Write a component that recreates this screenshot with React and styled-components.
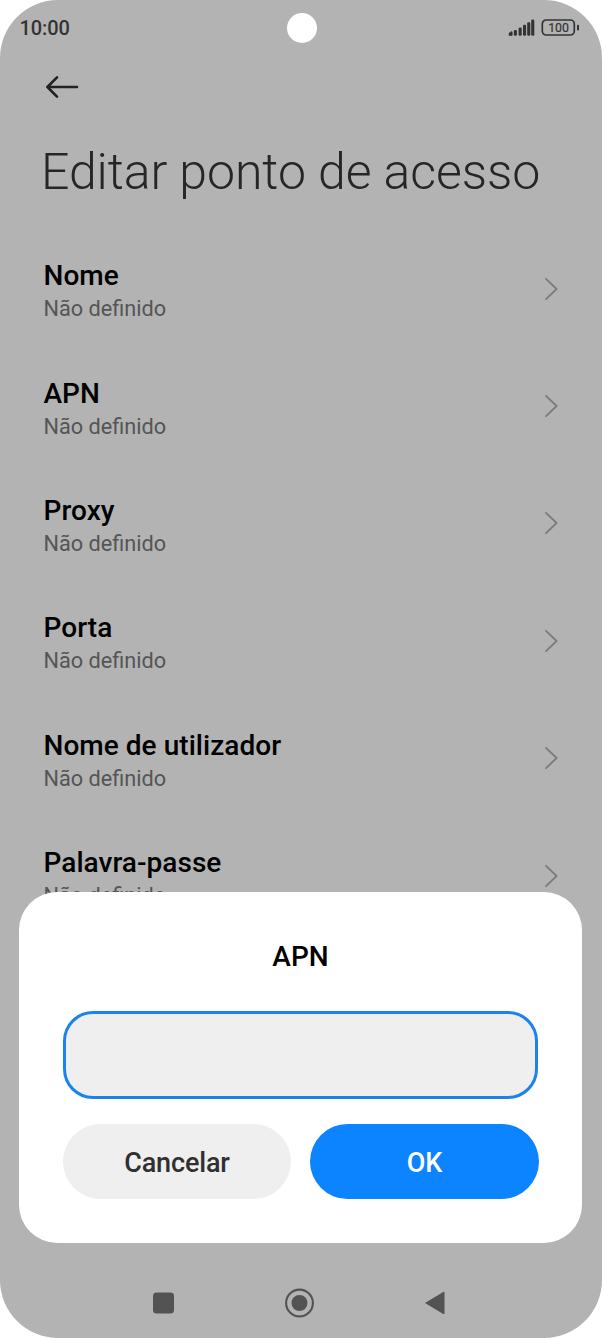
import React from "react";
import styled, { createGlobalStyle } from "styled-components";

const Global = createGlobalStyle`
  * { box-sizing: border-box; }
  body { margin: 0; background: #fff; font-family: Roboto, sans-serif; }
  button, input { font-family: inherit; }
`;

const Phone = styled.div`
  position: relative;
  width: 602px;
  height: 1338px;
  overflow: hidden;
  border-radius: 58px;
  background: #b3b3b3;
  display: flex;
  flex-direction: column;
`;

const StatusBar = styled.header`
  height: 56.6px;
  flex: none;
  display: grid;
  grid-template-columns: 1fr 30px 1fr;
  align-items: center;
  padding: 0 22px 0 19.5px;
`;

const Clock = styled.span`
  font-size: 20px;
  line-height: 24px;
  font-weight: 500;
  color: #333;
  letter-spacing: -0.1px;
  padding-bottom: 1px;
`;

const Camera = styled.span`
  width: 30px;
  height: 30px;
  border-radius: 50%;
  background: #fff;
  margin-left: 2.2px;
`;

const StatusIcons = styled.div`
  display: flex;
  justify-content: flex-end;
  align-items: center;
  padding-bottom: 0.6px;
`;

const BackButton = styled.button`
  display: flex;
  border: 0;
  padding: 0;
  background: none;
  margin: 19.4px 0 0 45px;
  width: 34px;
`;

const Title = styled.h1`
  margin: 44px 0 0 41px;
  font-size: 50px;
  line-height: 60px;
  font-weight: 300;
  letter-spacing: -0.08px;
  color: #262626;
  white-space: nowrap;
`;

const List = styled.ul`
  list-style: none;
  margin: 31.6px 0 0;
  padding: 0;
`;

const Item = styled.li`
  height: 117.4px;
  padding: 0 44px;
  display: flex;
  justify-content: space-between;
  align-items: center;
`;

const ItemText = styled.div`
  margin-left: -0.5px;
`;

const Chevron = styled.svg`
  margin-bottom: 7.4px;
`;

const Label = styled.div`
  font-size: 28px;
  line-height: 34px;
  font-weight: 500;
  letter-spacing: 0.04px;
  color: #000;
`;

const Value = styled.div`
  font-size: 21.7px;
  line-height: 32px;
  color: #555;
`;

const Dialog = styled.section`
  position: absolute;
  left: 19px;
  top: 892px;
  width: 563px;
  height: 351px;
  border-radius: 38px;
  background: #fff;
  padding: 48px 44px 44px;
`;

const DialogTitle = styled.h2`
  margin: 0 0 37px;
  text-align: center;
  font-size: 28px;
  line-height: 34px;
  font-weight: 500;
  color: #000;
`;

const Field = styled.input`
  display: block;
  width: 100%;
  height: 88px;
  border: 3px solid #1a84ec;
  border-radius: 30px;
  background: #efefef;
  padding: 0 24px;
  font-size: 28px;
  outline: none;
`;

const Actions = styled.div`
  display: grid;
  grid-template-columns: 1fr 1fr;
  gap: 19px;
  margin: 25px -0.5px 0;
`;

const Button = styled.button`
  height: 75px;
  border: 0;
  border-radius: 38px;
  padding: 2px 0 0 0.5px;
  font-size: 27px;
  letter-spacing: -0.15px;
  font-weight: 500;
  background: ${(p) => (p.$primary ? "#0d84ff" : "#efefef")};
  color: ${(p) => (p.$primary ? "#fff" : "#303030")};
`;

const NavBar = styled.nav`
  position: absolute;
  left: 0;
  right: 0;
  bottom: 20px;
  padding: 0 157px 0 152px;
  display: flex;
  justify-content: space-between;
  align-items: center;
`;

const items = ["Nome", "APN", "Proxy", "Porta", "Nome de utilizador", "Palavra-passe"];

export default function App() {
  return (
    <Phone>
      <Global />
      <StatusBar>
        <Clock>10:00</Clock>
        <Camera />
        <StatusIcons>
          <svg width="72" height="20" viewBox="0 0 72 20">
            <g fill="#333">
              <path d="M1 17.4V15.6Q1 15 1.6 14.7L3.4 13.7Q4.2 13.4 4.2 14.2V17.4Z" stroke="#333" strokeWidth=".6" strokeLinejoin="round" />
              <rect x="5.8" y="12" width="3.1" height="5.7" rx="1.2" />
              <rect x="10.6" y="9.5" width="3.1" height="8.2" rx="1.2" />
              <rect x="15" y="6.8" width="3.1" height="10.9" rx="1.2" />
              <rect x="19.2" y="4.3" width="3.1" height="13.4" rx="1.2" />
              <rect x="23.2" y="1.6" width="3.1" height="16.1" rx="1.2" />
            </g>
            <rect x="34.3" y="2" width="32" height="15" rx="4" fill="none" stroke="#333" strokeWidth="1.7" />
            <rect x="69" y="6.8" width="2" height="5.6" rx="1" fill="#333" />
            <text x="50.5" y="14" textAnchor="middle" fontSize="12.3" fontWeight="400" fill="#333" stroke="#333" strokeWidth="0.2">100</text>
          </svg>
        </StatusIcons>
      </StatusBar>
      <BackButton aria-label="Voltar">
        <svg width="34" height="22" viewBox="0 0 34 22" fill="none" stroke="#222" strokeWidth="2.6" strokeLinecap="round" strokeLinejoin="round">
          <path d="M32 11H2.4M12 1.4L2.4 11l9.6 9.6" />
        </svg>
      </BackButton>
      <Title>Editar ponto de acesso</Title>
      <List>
        {items.map((name) => (
          <Item key={name}>
            <ItemText>
              <Label>{name}</Label>
              <Value>Não definido</Value>
            </ItemText>
            <Chevron width="14" height="24" viewBox="0 0 14 24" fill="none" stroke="#7b7b7b" strokeWidth="1.8" strokeLinecap="round" strokeLinejoin="round">
              <path d="M2 1.8L12.6 12 2 22.2" />
            </Chevron>
          </Item>
        ))}
      </List>
      <Dialog>
        <DialogTitle>APN</DialogTitle>
        <Field aria-label="APN" />
        <Actions>
          <Button>Cancelar</Button>
          <Button $primary>OK</Button>
        </Actions>
      </Dialog>
      <NavBar>
        <svg width="22" height="22"><rect x="1" y="0.5" width="21" height="21" rx="3.5" fill="#535353" /></svg>
        <svg width="30" height="30" viewBox="0 0 30 30">
          <circle cx="15.5" cy="15" r="13.4" fill="none" stroke="#535353" strokeWidth="2.1" />
          <circle cx="15.5" cy="15" r="8" fill="#535353" />
        </svg>
        <svg width="21" height="26" viewBox="0 0 21 26"><path d="M20 2.1v21.8L1.8 13z" fill="#535353" stroke="#535353" strokeLinejoin="round" /></svg>
      </NavBar>
    </Phone>
  );
}
